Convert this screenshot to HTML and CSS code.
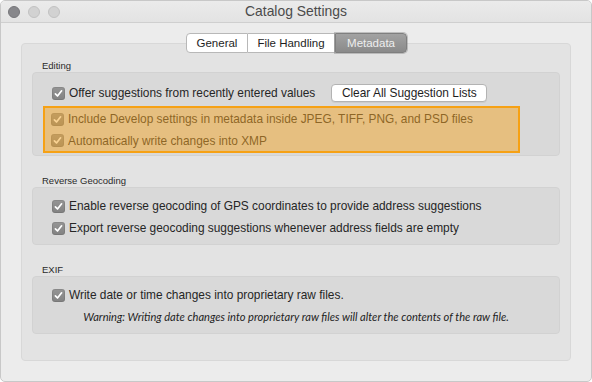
FILE: index.html
```html
<!DOCTYPE html>
<html>
<head>
<meta charset="utf-8">
<link rel="stylesheet" href="styles.css">
</head>
<body>
<div class="window">
  <div class="titlebar">
    <div class="lights">
      <span class="light close"></span>
      <span class="light"></span>
      <span class="light"></span>
    </div>
    <div class="title">Catalog Settings</div>
    <div class="spacer"></div>
  </div>
  <div class="content">
    <div class="tabs">
      <span class="tab">General</span>
      <span class="tab">File Handling</span>
      <span class="tab selected">Metadata</span>
    </div>
    <div class="panel">
      <div class="section">
        <div class="label">Editing</div>
        <div class="group editing">
          <div class="row">
            <span class="cb"><svg width="13" height="13" viewBox="0 0 13 13"><path d="M3.4 6.8 L5.5 9 L9.6 3.8" fill="none" stroke="#fff" stroke-width="1.7" stroke-linecap="round" stroke-linejoin="round"/></svg></span>
            <span class="text">Offer suggestions from recently entered values</span>
            <button class="btn">Clear All Suggestion Lists</button>
          </div>
          <div class="highlight">
            <div class="row">
              <span class="cb"><svg width="13" height="13" viewBox="0 0 13 13"><path d="M3.4 6.8 L5.5 9 L9.6 3.8" fill="none" stroke="#fff" stroke-width="1.7" stroke-linecap="round" stroke-linejoin="round"/></svg></span>
              <span class="text">Include Develop settings in metadata inside JPEG, TIFF, PNG, and PSD files</span>
            </div>
            <div class="row">
              <span class="cb"><svg width="13" height="13" viewBox="0 0 13 13"><path d="M3.4 6.8 L5.5 9 L9.6 3.8" fill="none" stroke="#fff" stroke-width="1.7" stroke-linecap="round" stroke-linejoin="round"/></svg></span>
              <span class="text">Automatically write changes into XMP</span>
            </div>
          </div>
        </div>
      </div>
      <div class="section">
        <div class="label">Reverse Geocoding</div>
        <div class="group">
          <div class="row">
            <span class="cb"><svg width="13" height="13" viewBox="0 0 13 13"><path d="M3.4 6.8 L5.5 9 L9.6 3.8" fill="none" stroke="#fff" stroke-width="1.7" stroke-linecap="round" stroke-linejoin="round"/></svg></span>
            <span class="text">Enable reverse geocoding of GPS coordinates to provide address suggestions</span>
          </div>
          <div class="row">
            <span class="cb"><svg width="13" height="13" viewBox="0 0 13 13"><path d="M3.4 6.8 L5.5 9 L9.6 3.8" fill="none" stroke="#fff" stroke-width="1.7" stroke-linecap="round" stroke-linejoin="round"/></svg></span>
            <span class="text">Export reverse geocoding suggestions whenever address fields are empty</span>
          </div>
        </div>
      </div>
      <div class="section">
        <div class="label">EXIF</div>
        <div class="group">
          <div class="row">
            <span class="cb"><svg width="13" height="13" viewBox="0 0 13 13"><path d="M3.4 6.8 L5.5 9 L9.6 3.8" fill="none" stroke="#fff" stroke-width="1.7" stroke-linecap="round" stroke-linejoin="round"/></svg></span>
            <span class="text">Write date or time changes into proprietary raw files.</span>
          </div>
          <div class="warning">Warning: Writing date changes into proprietary raw files will alter the contents of the raw file.</div>
        </div>
      </div>
    </div>
  </div>
</div>
</body>
</html>
```
FILE: styles.css
```css
* { box-sizing: border-box; }
html, body { margin: 0; padding: 0; background: #ffffff; }
body {
  width: 592px;
  height: 382px;
  font-family: "Liberation Sans", Arial, sans-serif;
  color: #262626;
}
.window {
  width: 592px;
  height: 382px;
  background: #ececec;
  border: 1px solid #c8c8c8;
  border-radius: 5px;
  overflow: hidden;
}
.titlebar {
  height: 22px;
  display: grid;
  grid-template-columns: 80px 1fr 80px;
  align-items: center;
  background: linear-gradient(#ebebeb, #e3e3e3);
  border-bottom: 1px solid #cfcfcf;
}
.lights {
  display: flex;
  gap: 8px;
  padding-left: 7px;
}
.light {
  width: 12px;
  height: 12px;
  border-radius: 50%;
  background: #d2d2d2;
  border: 1px solid #c2c2c2;
}
.light.close {
  background: #87878b;
  border-color: #76767a;
}
.title {
  text-align: center;
  font-size: 13.9px;
  color: #4b4b4b;
  line-height: 21px;
}
.content {
  padding: 10px 20px 0 20px;
}
.tabs {
  display: flex;
  justify-content: center;
  height: 20px;
  margin-bottom: -10px;
  position: relative;
  z-index: 1;
  padding-left: 1px;
}
.tab {
  font-size: 11.5px;
  line-height: 18px;
  height: 20px;
  padding: 0 9.5px;
  background: #ffffff;
  border: 1px solid #b8b8b8;
  border-left: none;
  color: #1e1e1e;
}
.tab:first-child {
  border-left: 1px solid #b8b8b8;
  border-radius: 4px 0 0 4px;
}
.tab.selected {
  background: linear-gradient(#a2a2a2, #8a8a8a);
  border: 1px solid #7f7f7f;
  border-radius: 0 4px 4px 0;
  color: #eeeeee;
  padding: 0 11px;
  box-shadow: 0 0 0 1px rgba(110,110,110,0.35);
}
.panel {
  height: 318px;
  background: #e3e3e3;
  border: 1px solid #d8d8d8;
  border-radius: 4px;
  padding: 16px 10px 0 10px;
}
.section + .section { margin-top: 19px; }
.label {
  font-size: 9.5px;
  line-height: 12px;
  height: 12px;
  padding-left: 10px;
  color: #2a2a2a;
}
.group {
  background: #d9d9d9;
  border: 1px solid #d2d2d2;
  border-radius: 4px;
  padding: 7px 0 5px 0;
}
.group.editing {
  padding: 9px 0 2px 0;
}
.row {
  display: flex;
  align-items: center;
  height: 22px;
  padding-left: 19px;
  font-size: 11.9px;
}
.cb {
  width: 13px;
  height: 13px;
  border-radius: 3px;
  background: linear-gradient(#959595, #828282);
  box-shadow: inset 0 0 0 1px rgba(0,0,0,0.08);
  display: flex;
  margin-right: 4px;
  flex: none;
}
.cb svg { display: block; }
.text { white-space: nowrap; }
.btn {
  margin-left: 16px;
  font-family: "Liberation Sans", Arial, sans-serif;
  font-size: 11.9px;
  color: #1e1e1e;
  background: #ffffff;
  border: 1px solid #b3b3b3;
  border-radius: 4px;
  height: 18px;
  width: 156px;
  padding: 0;
  line-height: 16px;
  box-shadow: 0 1px 0 rgba(0,0,0,0.06);
}
.highlight {
  position: relative;
  width: 477px;
  margin: 2px 0 0 10px;
  border: 2px solid #f6a114;
}
.highlight .row { padding-left: 6px; }
.highlight .row + .row { height: 21px; }
.highlight::after {
  content: "";
  position: absolute;
  inset: 0;
  background: rgba(244, 166, 40, 0.5);
}
.warning {
  height: 22px;
  line-height: 22px;
  text-align: center;
  font-family: Lato, "Liberation Sans", sans-serif;
  font-style: italic;
  font-size: 11.1px;
  letter-spacing: 0;
  color: #1e1e1e;
}
```
